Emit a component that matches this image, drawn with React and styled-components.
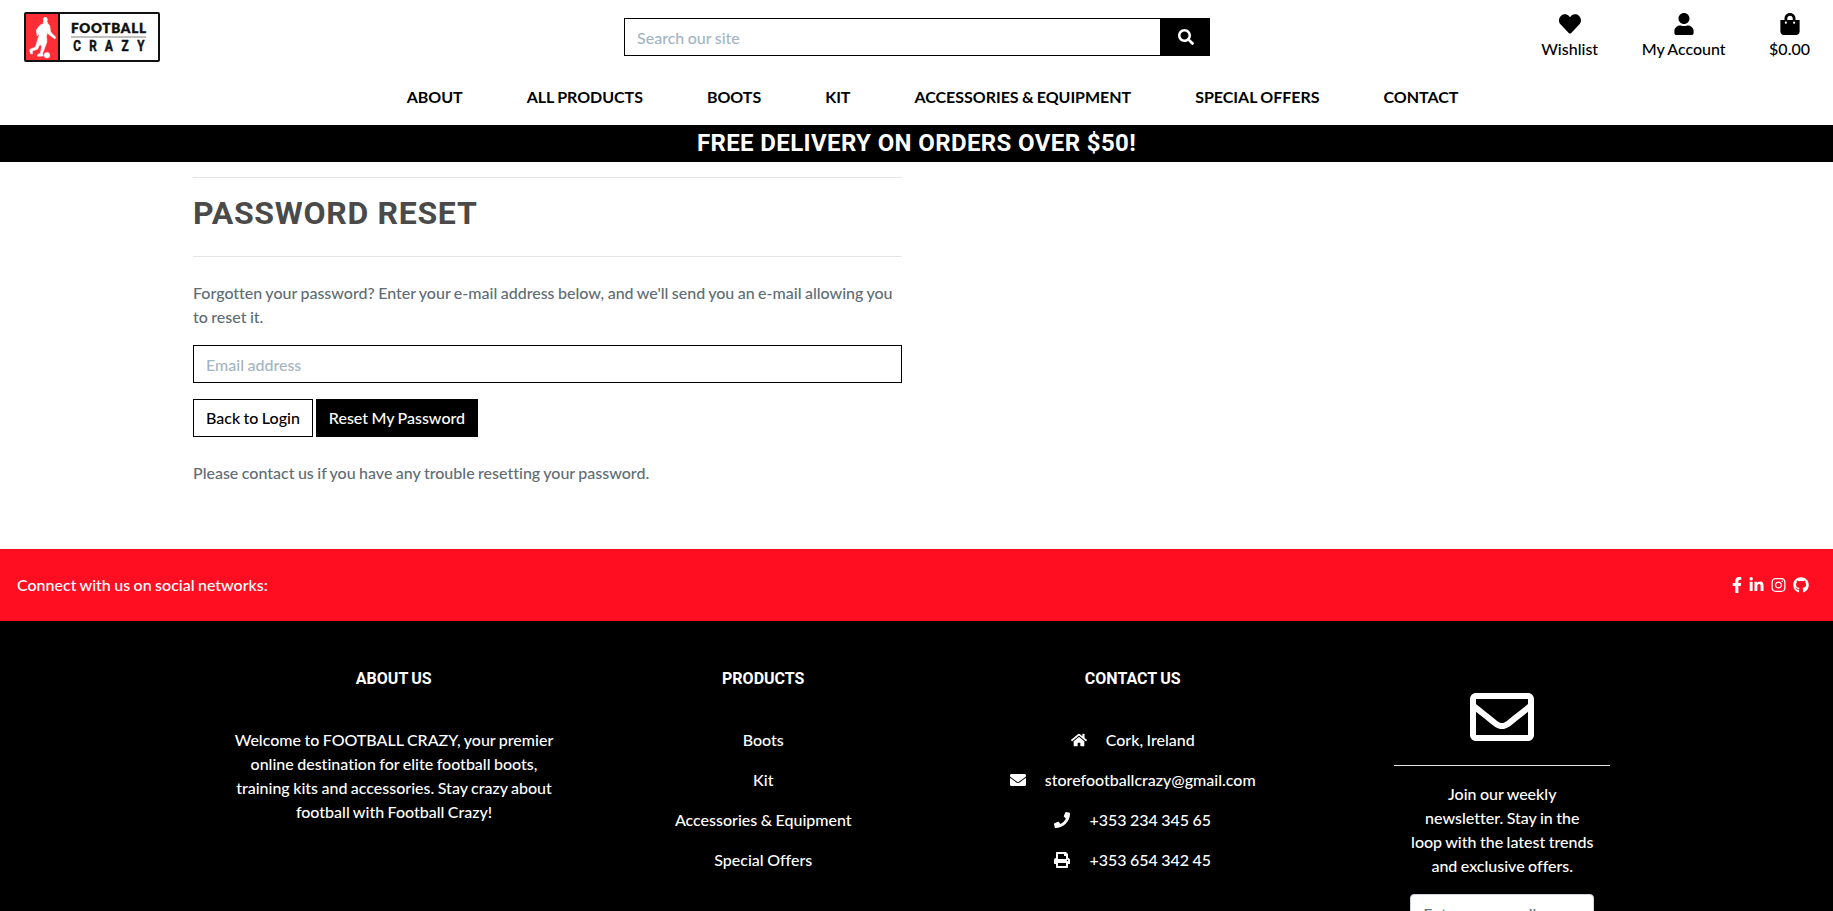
import React from "react";
import styled, { createGlobalStyle } from "styled-components";
import {
  FaHeart, FaUser, FaShoppingBag, FaSearch, FaFacebookF, FaLinkedinIn,
  FaInstagram, FaGithub, FaHome, FaEnvelope, FaPhone, FaPrint, FaRegEnvelope,
} from "react-icons/fa";

const GlobalStyle = createGlobalStyle`
  *, *::before, *::after { box-sizing: border-box; }
  html, body { margin: 0; padding: 0; }
  body {
    height: 911px;
    overflow: hidden;
    background: #fff;
    color: #000;
    font: 500 16px/24px Lato, sans-serif;
    font-variant-ligatures: none;
    word-spacing: -0.6px;
  }
  a { color: inherit; text-decoration: none; }
  svg { display: block; flex: none; }
`;

const Page = styled.div`
  height: 911px;
  overflow: hidden;
`;

const Header = styled.header`
  display: grid;
  grid-template-columns: 1fr 586px 1fr;
  height: 74px;
  padding: 12px 23px 0 24px;
`;

const LogoLink = styled.a`
  width: 136px;
  height: 50px;
`;

const SearchForm = styled.form`
  display: flex;
  height: 38px;
  margin-top: 6px;
`;

const Input = styled.input`
  display: block;
  width: 100%;
  height: 38px;
  padding: 6px 12px;
  border: 1px solid ${(p) => p.$border || "#000"};
  border-radius: ${(p) => p.$radius || "0"};
  background: #fff;
  font: inherit;
  word-spacing: inherit;
  outline: none;
  &::placeholder { color: ${(p) => p.$hint || "#a3b5c3"}; opacity: 1; }
`;

const SearchButton = styled.button`
  display: flex;
  align-items: center;
  justify-content: center;
  flex: 0 0 49px;
  border: 0;
  background: #000;
  color: #fff;
  font-size: 16px;
`;

const UserLinks = styled.nav`
  display: flex;
  justify-content: flex-end;
  gap: 43.5px;
`;

const UserLink = styled.a`
  display: flex;
  flex-direction: column;
  align-items: center;
  padding-top: 1px;
  gap: 2px;
  height: 50px;
  svg { height: 22px; width: auto; }
`;

const MainNav = styled.nav`
  display: flex;
  justify-content: center;
  align-items: center;
  gap: 64px;
  height: 51px;
  padding: 0 0 6px 32px;
  font-weight: 700;
  letter-spacing: -0.02px;
`;

const Banner = styled.div`
  height: 37px;
  background: #000;
  color: #fff;
  text-align: center;
  font: 700 24px/36px Roboto, sans-serif;
  letter-spacing: 0.38px;
  word-spacing: 0;
`;

const Main = styled.main`
  width: 709px;
  height: 387px;
  margin-left: 193px;
  padding-top: 15px;
`;

const Rule = styled.hr`
  margin: 0;
  border: 0;
  border-top: 1px solid ${(p) => p.$color || "#e5e5e5"};
`;

const Title = styled.h2`
  margin: 16px 0 23px;
  color: #4a4a4a;
  font: 700 32px/39px Roboto, sans-serif;
  letter-spacing: 0.7px;
  word-spacing: 0;
`;

const Copy = styled.p`
  margin: ${(p) => p.$margin || "0"};
  color: #5f6d75;
`;

const Actions = styled.div`
  display: flex;
  gap: 3px;
  margin-top: 16px;
`;

const Button = styled.button`
  height: 38px;
  padding: 0 12px;
  border: 1px solid #000;
  background: ${(p) => (p.$filled ? "#000" : "#fff")};
  color: ${(p) => (p.$filled ? "#fff" : "#000")};
  font: inherit;
  word-spacing: inherit;
`;

const SocialBar = styled.section`
  display: flex;
  align-items: center;
  justify-content: space-between;
  height: 72px;
  padding: 0 24px 0 17px;
  background: #ff0d20;
  color: #fff;
`;

const SocialIcons = styled.div`
  display: flex;
  gap: 7px;
  svg { height: 16px; }
  svg:nth-child(1) { width: 10px; }
  svg:nth-child(2), svg:nth-child(3) { width: 15px; }
  svg:nth-child(4) { width: 16px; }
`;

const Footer = styled.footer`
  display: grid;
  grid-template-columns: repeat(4, 369.5px);
  height: 290px;
  padding-left: 209px;
  background: #000;
  color: #fff;
  text-align: center;
`;

const Column = styled.section`
  padding: 46px 24px 0;
`;

const Heading = styled.h6`
  margin: 0 0 37px;
  font: 700 16px/24px Roboto, sans-serif;
`;

const About = styled.p`
  width: 322px;
  margin: 0 auto;
`;

const FooterLink = styled.a`
  display: flex;
  align-items: center;
  justify-content: center;
  gap: 19px;
  margin-bottom: 16px;
  svg { height: 16px; width: auto; }
`;

const Newsletter = styled.section`
  display: flex;
  flex-direction: column;
  align-items: stretch;
  width: 216px;
  margin: 64px auto 0;
  > svg { align-self: center; margin-bottom: 16px; }
`;

const Pitch = styled.p`
  margin: 16px 14px;
`;

const SignUp = styled.div`
  padding: 0 16px;
`;

const Logo = () => (
  <svg width="136" height="50" viewBox="0 0 136 50" role="img" aria-label="Football Crazy">
    <rect x="1" y="1" width="134" height="48" rx="1" fill="#fff" stroke="#111" strokeWidth="2" />
    <rect x="2" y="2" width="33" height="46" fill="#ff2d35" />
    <path d="M35 1v48" stroke="#111" strokeWidth="2" />
    <ellipse cx="21.300" cy="7.800" rx="2.300" ry="2.900" fill="#fff" />
    <path
      d="M19.500 10 23.500 10.200 23.800 12C25.500 12.500 26 14 26 16L26.600 20 31.500 25 31 27 24.800 22.500 23.600 20.500 22.300 24.500C23.300 28 23 31 21.300 34L18.600 41.500 19.300 44 13.500 44.200 13.500 42.800 16.500 41 17.600 34.500 16 32 13.500 37.200 8.500 38.800 8.300 42 6.600 41.800 5.600 37.500 11.500 35 13.500 28 15 23.500 14.500 22 13.200 24 12.300 18 16 13.300 19.300 11.800Z"
      fill="#fff"
      stroke="#fff"
      strokeWidth="0.600"
      strokeLinejoin="round"
    />
    <circle cx="23" cy="43.200" r="3" fill="#fff" />
    <text x="47" y="21" textLength="75" lengthAdjust="spacing" fontFamily="Lato, sans-serif" fontWeight="800" fontSize="13.500" fill="#111" stroke="#111" strokeWidth="0.300">FOOTBALL</text>
    <path d="M47 25h75" stroke="#aaa" strokeWidth="1.500" />
    {["C", "R", "A", "Z", "Y"].map((letter, i) => (
      <text key={letter} x={(53 + i * 16) / 0.78} y="39.500" transform="scale(.78 1)" textAnchor="middle" fontFamily="Roboto, sans-serif" fontWeight="700" fontSize="15" fill="#111" stroke="#111" strokeWidth="0.500">{letter}</text>
    ))}
  </svg>
);

const navItems = ["ABOUT", "ALL PRODUCTS", "BOOTS", "KIT", "ACCESSORIES & EQUIPMENT", "SPECIAL OFFERS", "CONTACT"];
const products = ["Boots", "Kit", "Accessories & Equipment", "Special Offers"];
const userLinks = [[FaHeart, "Wishlist"], [FaUser, "My Account"], [FaShoppingBag, "$0.00"]];
const contacts = [
  [FaHome, "Cork, Ireland"],
  [FaEnvelope, "storefootballcrazy@gmail.com"],
  [FaPhone, "+353 234 345 65"],
  [FaPrint, "+353 654 342 45"],
];

export default function App() {
  return (
    <Page>
      <GlobalStyle />
      <Header>
        <LogoLink href="#"><Logo /></LogoLink>
        <SearchForm>
          <Input placeholder="Search our site" />
          <SearchButton type="button" aria-label="Search"><FaSearch /></SearchButton>
        </SearchForm>
        <UserLinks>
          {userLinks.map(([Icon, label]) => (
            <UserLink href="#" key={label}><Icon />{label}</UserLink>
          ))}
        </UserLinks>
      </Header>
      <MainNav>{navItems.map((item) => <a href="#" key={item}>{item}</a>)}</MainNav>
      <Banner>FREE DELIVERY ON ORDERS OVER $50!</Banner>
      <Main>
        <Rule />
        <Title>PASSWORD RESET</Title>
        <Rule />
        <Copy $margin="24px 0 16px">
          Forgotten your password? Enter your e-mail address below, and we'll send you an e-mail allowing you to reset it.
        </Copy>
        <Input placeholder="Email address" />
        <Actions>
          <Button>Back to Login</Button>
          <Button $filled>Reset My Password</Button>
        </Actions>
        <Copy $margin="24px 0 0">Please contact us if you have any trouble resetting your password.</Copy>
      </Main>
      <SocialBar>
        <span>Connect with us on social networks:</span>
        <SocialIcons><FaFacebookF /><FaLinkedinIn /><FaInstagram /><FaGithub /></SocialIcons>
      </SocialBar>
      <Footer>
        <Column>
          <Heading>ABOUT US</Heading>
          <About>
            Welcome to FOOTBALL CRAZY, your premier online destination for elite football boots, training kits and
            accessories. Stay crazy about football with Football Crazy!
          </About>
        </Column>
        <Column>
          <Heading>PRODUCTS</Heading>
          {products.map((item) => <FooterLink href="#" key={item}>{item}</FooterLink>)}
        </Column>
        <Column>
          <Heading>CONTACT US</Heading>
          {contacts.map(([Icon, label]) => <FooterLink as="div" key={label}><Icon />{label}</FooterLink>)}
        </Column>
        <Newsletter>
          <FaRegEnvelope size={64} />
          <Rule />
          <Pitch>Join our weekly newsletter. Stay in the loop with the latest trends and exclusive offers.</Pitch>
          <SignUp><Input placeholder="Enter your email" $border="#ced4da" $radius="4px" $hint="#6c757d" /></SignUp>
        </Newsletter>
      </Footer>
    </Page>
  );
}
